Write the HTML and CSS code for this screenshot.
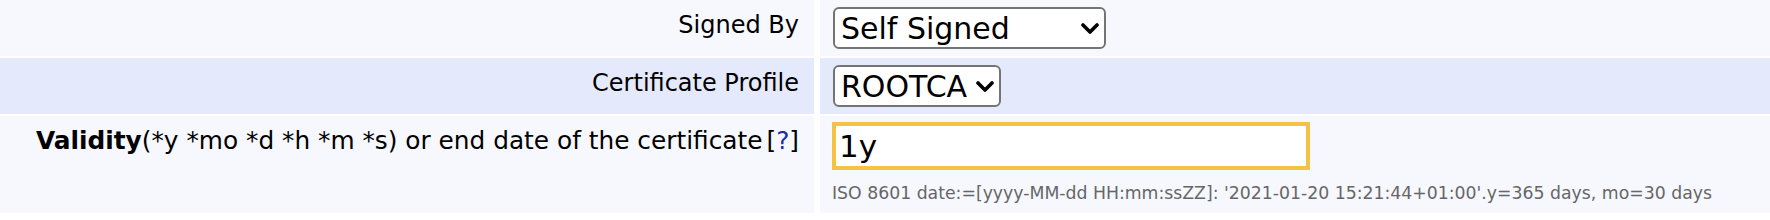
FILE: index.html
```html
<!DOCTYPE html>
<html>
<head>
<meta charset="utf-8">
<link rel="stylesheet" href="styles.css">
</head>
<body>
<div class="form">
  <div class="row row-light">
    <div class="label">Signed By</div>
    <div class="field">
      <span class="select-wrap">
        <select class="select select-wide"><option>Self Signed</option></select>
        <svg class="chev" viewBox="0 0 18 11" width="18" height="11"><path d="M2 2 L9 9 L16 2" fill="none" stroke="#000" stroke-width="3.6" stroke-linecap="round" stroke-linejoin="round"/></svg>
      </span>
    </div>
  </div>
  <div class="row row-blue">
    <div class="label">Certificate Profile</div>
    <div class="field">
      <span class="select-wrap">
        <select class="select select-narrow"><option>ROOTCA</option></select>
        <svg class="chev" viewBox="0 0 18 11" width="18" height="11"><path d="M2 2 L9 9 L16 2" fill="none" stroke="#000" stroke-width="3.6" stroke-linecap="round" stroke-linejoin="round"/></svg>
      </span>
    </div>
  </div>
  <div class="row row-light row-tall">
    <div class="label label-top"><b>Validity</b>(*y *mo *d *h *m *s) or end date of the certificate<span class="help">[<a class="help-link" href="#">?</a>]</span></div>
    <div class="field field-col">
      <input class="text-input" type="text" value="1y">
      <div class="hint">ISO 8601 date:=[yyyy-MM-dd HH:mm:ssZZ]: '2021-01-20 15:21:44+01:00'.y=365 days, mo=30 days</div>
    </div>
  </div>
</div>
</body>
</html>
```

FILE: styles.css
```css
html, body {
  margin: 0;
  padding: 0;
  background: #ffffff;
}
body {
  font-family: "DejaVu Sans", Verdana, sans-serif;
  color: #000;
}
.form {
  display: flex;
  flex-direction: column;
  gap: 2px;
}
.row {
  display: grid;
  grid-template-columns: 814px 1fr;
  column-gap: 6px;
}
.row-light > div { background: #f6f8fe; }
.row-blue > div { background: #e4eafc; }
.label {
  font-size: 24px;
  line-height: 28px;
  text-align: right;
  padding-right: 15px;
  padding-bottom: 6px;
  display: flex;
  align-items: center;
  justify-content: flex-end;
  white-space: nowrap;
}
.label-top {
  display: block;
  font-size: 24.8px;
  padding-top: 11px;
  padding-bottom: 0;
}
.help {
  margin-left: 4px;
}
.help-link {
  color: #1a2ea6;
  text-decoration: none;
}
.field {
  padding: 7px 0 7px 13px;
  display: flex;
  align-items: center;
}
.field-col {
  flex-direction: column;
  align-items: flex-start;
  padding: 6px 0 9px 12px;
}
.select-wrap {
  position: relative;
  display: inline-block;
}
.select {
  appearance: none;
  -webkit-appearance: none;
  font-family: "DejaVu Sans", Verdana, sans-serif;
  font-size: 30px;
  color: #000;
  background: #ffffff;
  border: 2px solid #747474;
  border-radius: 6px;
  height: 42px;
  padding: 0 30px 0 6px;
  margin: 0;
  box-sizing: border-box;
  display: block;
}
.select-wide { width: 273px; }
.select-narrow { width: 168px; }
.chev {
  position: absolute;
  right: 7px;
  top: 16px;
  pointer-events: none;
}
.text-input {
  box-sizing: border-box;
  width: 478px;
  height: 48px;
  border: 4px solid #f6c244;
  border-radius: 0;
  outline: none;
  background: #ffffff;
  font-family: "DejaVu Sans", Verdana, sans-serif;
  font-size: 31px;
  color: #000;
  padding: 0 3px;
  margin: 0;
}
.hint {
  margin-top: 12px;
  font-size: 17.3px;
  line-height: 22px;
  color: #666666;
  white-space: nowrap;
}
```
